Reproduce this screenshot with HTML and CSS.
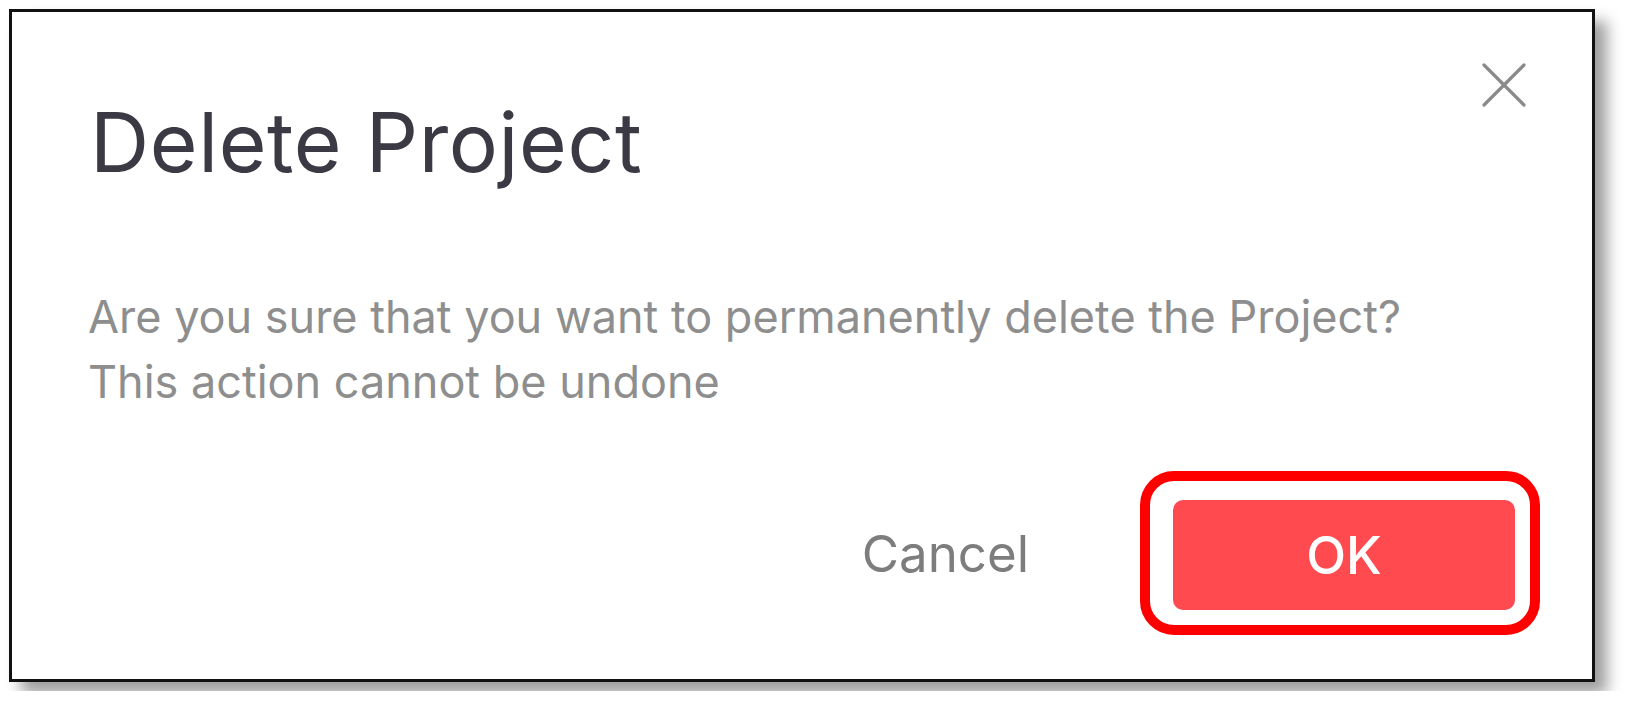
FILE: index.html
```html
<!DOCTYPE html>
<html lang="en">
<head>
<meta charset="utf-8">
<title>Delete Project</title>
<link rel="stylesheet" href="styles.css">
</head>
<body>
<div class="dialog">
  <div class="dialog-header">
    <h1 class="dialog-title">Delete Project</h1>
    <button class="close-btn" aria-label="Close">
      <svg viewBox="0 0 44 44" width="44" height="44"><path d="M2 2 L42 42 M42 2 L2 42" stroke="#8a8a8a" stroke-width="3.2" fill="none" stroke-linecap="round"/></svg>
    </button>
  </div>
  <div class="dialog-body">
    <p>Are you sure that you want to permanently delete the Project?</p>
    <p>This action cannot be undone</p>
  </div>
  <div class="dialog-footer">
    <button class="btn-cancel">Cancel</button>
    <div class="highlight">
      <button class="btn-ok">OK</button>
    </div>
  </div>
</div>
</body>
</html>
```
FILE: styles.css
```css
html, body {
  margin: 0;
  padding: 0;
  background: #ffffff;
}
body {
  padding: 9px;
  font-family: "Inter", "Noto Sans", sans-serif;
}
.dialog {
  box-sizing: border-box;
  width: 1586px;
  height: 673px;
  border: 3px solid #111111;
  background: #ffffff;
  box-shadow: 12px 12px 14px rgba(0, 0, 0, 0.38);
  display: flex;
  flex-direction: column;
}
.dialog-header {
  display: flex;
  justify-content: space-between;
  align-items: flex-start;
  padding: 51px 66px 0 78px;
}
.dialog-title {
  margin: 40px 0 0 0;
  font-size: 82px;
  line-height: 80px;
  font-weight: 400;
  color: #3a3944;
  letter-spacing: 0.6px;
}
.close-btn {
  border: none;
  background: none;
  padding: 0;
  width: 44px;
  height: 44px;
  display: block;
  cursor: pointer;
}
.close-btn svg {
  display: block;
}
.dialog-body {
  padding: 101px 0 0 76px;
}
.dialog-body p {
  margin: 0;
  font-size: 45px;
  line-height: 65px;
  color: #8e8e8e;
}
.dialog-footer {
  margin-top: auto;
  display: flex;
  justify-content: flex-end;
  align-items: center;
  padding: 0 52px 44px 0;
}
.btn-cancel {
  border: none;
  background: none;
  font-family: inherit;
  font-size: 51px;
  color: #7d7d7d;
  padding: 0;
  margin-right: 111px;
  cursor: pointer;
}
.highlight {
  border: 10px solid #ff0000;
  border-radius: 34px;
  padding: 19px 15px 15px 23px;
}
.btn-ok {
  display: flex;
  align-items: center;
  justify-content: center;
  width: 342px;
  height: 110px;
  border: none;
  border-radius: 10px;
  background: #ff4b50;
  color: #ffffff;
  font-family: inherit;
  font-size: 52px;
  font-weight: 500;
  cursor: pointer;
}
```
